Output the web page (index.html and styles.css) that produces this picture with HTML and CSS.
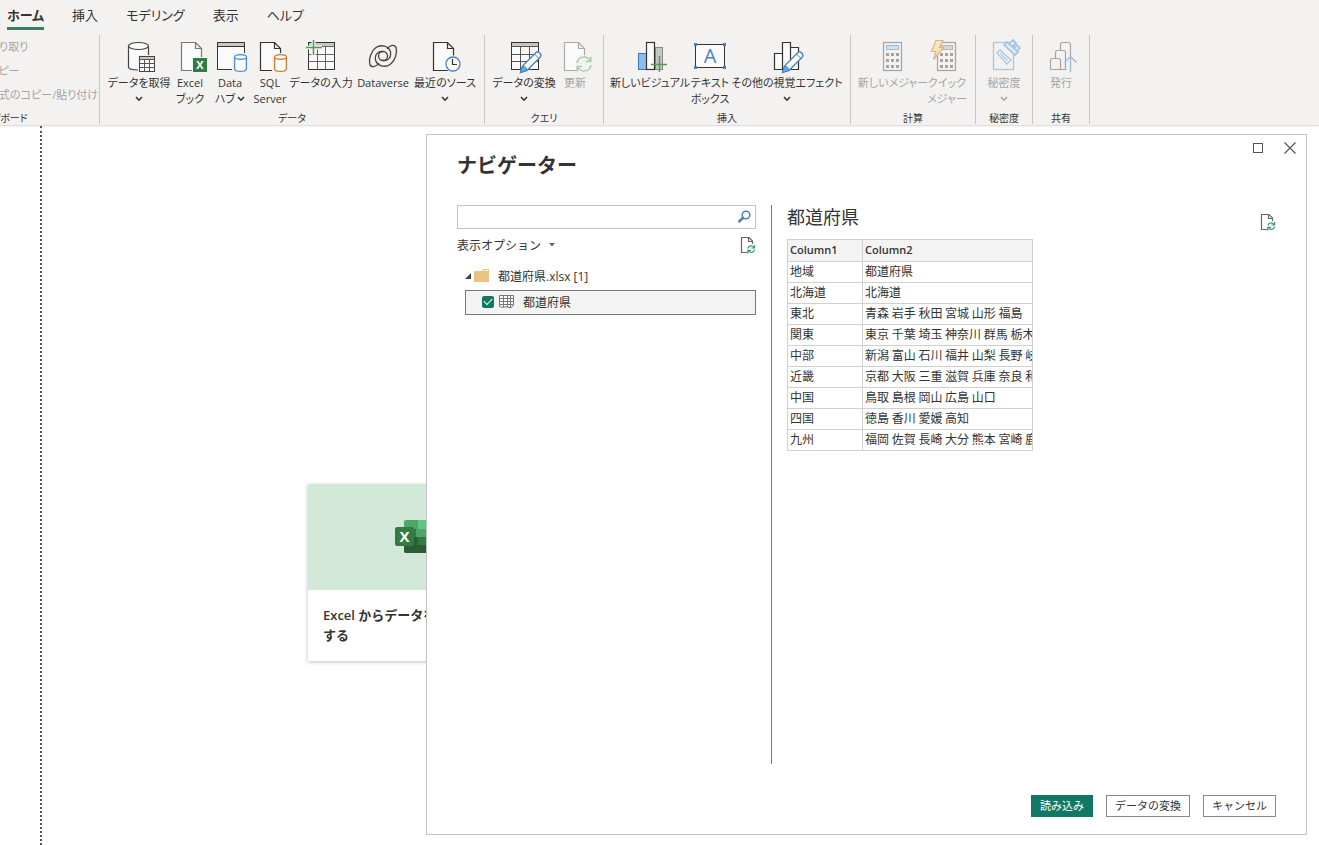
FILE: index.html
```html
<!DOCTYPE html>
<html lang="ja">
<head>
    <meta charset="UTF-8">
    <meta name="viewport" content="width=device-width, initial-scale=1.0">
    <title>ナビゲーター</title>
    <link rel="stylesheet" href="styles.css">
</head>
<body>

<!-- shared icon parts -->
<svg class="defs" width="0" height="0" aria-hidden="true">
    <defs>
        <symbol id="doc" viewBox="0 0 22 30" overflow="visible">
            <path d="M.5 .5H14.5L20.5 6.5V28.500H.5Z M14.500 .5V6.500H20.5" fill="#fafafa" stroke="currentColor" stroke-width="1.2"/>
        </symbol>
        <symbol id="cyl" viewBox="0 0 14 18" overflow="visible">
            <path d="M.6 3V15C.6 18.200 12.400 18.200 12.400 15V3" fill="#fafafa" stroke="currentColor" stroke-width="1.3"/>
            <ellipse cx="6.500" cy="3" rx="5.900" ry="2.300" fill="#fafafa" stroke="currentColor" stroke-width="1.3"/>
        </symbol>
        <symbol id="pen" viewBox="0 0 22 22" overflow="visible">
            <path d="M.5 21.500L2.500 15L16 1.500C18-.5 22.500 3.500 20.300 6L7 19.500Z" fill="#fafafa" stroke="#4a84bf" stroke-width="1.4"/>
            <path d="M.5 21.500L2.500 15.500C5 15 7 17 7 19.500Z" fill="#69a7e0" stroke="#4a84bf"/>
            <path d="M14.500 3L19 7.500" stroke="#4a84bf" fill="none"/>
        </symbol>
        <symbol id="sync" viewBox="0 0 16 16" overflow="visible">
            <path d="M1 7C2 0 11-1 14.500 5M14.800 .5V5.500H10M15 9C14 16 5 17 1.500 11M1.200 15.500V10.500H6" fill="none" stroke="currentColor" stroke-width="1.4"/>
        </symbol>
        <symbol id="chev" viewBox="0 0 8 6">
            <path d="M1 1L4 4.200L7 1" fill="none" stroke="currentColor" stroke-width="1.600"/>
        </symbol>
        <symbol id="keys" viewBox="0 0 20 30" overflow="visible">
            <rect x=".5" y=".5" width="18" height="28" fill="#f3f2f1" stroke="#a6a4a2" stroke-width="1.2"/>
            <path d="M3 11H6V14H3ZM8 11H11V14H8ZM13 11H16V14H13ZM3 17H6V20H3ZM8 17H11V20H8ZM13 17H16V20H13ZM3 23H6V26H3ZM8 23H11V26H8ZM13 23H16V26H13Z" fill="#a6a4a2"/>
        </symbol>
        <symbol id="lobe" viewBox="0 0 32 32" overflow="visible">
            <path d="M12 22C9 26.500 4 27 2.800 23C1.500 18 4 10 9 6.500C14 3 22 5 23.500 11C24.500 17 20 20.500 16 19.500"/>
        </symbol>
        <symbol id="refresh-doc" viewBox="0 0 16 18">
            <path d="M7 16.500H1.500V1.500H9L12.500 5V8M8.500 1.500V5.500H12.500" fill="none" stroke="#666" stroke-width="1.2"/>
            <path d="M7.800 12.500C8.500 9.500 12.500 9 14 11.500M14.600 9V12H11.500M14.700 13.500C14 16.800 10 17.300 8.500 14.700M7.800 17.400V14.300H11" fill="none" stroke="#3f9677" stroke-width="1.2"/>
        </symbol>
    </defs>
</svg>

<header class="ribbon">
    <nav class="tabs">
        <a href="#" class="tab active">ホーム</a>
        <a href="#" class="tab">挿入</a>
        <a href="#" class="tab">モデリング</a>
        <a href="#" class="tab">表示</a>
        <a href="#" class="tab">ヘルプ</a>
    </nav>

    <div class="groups">
        <section class="group clipboard">
            <div class="stack">
                <button type="button" disabled>切り取り</button>
                <button type="button" disabled>コピー</button>
                <button type="button" disabled>書式のコピー/貼り付け</button>
            </div>
            <h2>クリップボード</h2>
        </section>

        <section class="group">
            <div class="tools">
                <button type="button" class="tool medium">
                    <svg class="icon" viewBox="0 0 32 32">
                        <path d="M5.500 5V26C5.500 30 25.500 30 25.500 26V5" fill="#fafafa" stroke="#444" stroke-width="1.200"/>
                        <ellipse cx="15.500" cy="5" rx="10" ry="3.500" fill="#fafafa" stroke="#444" stroke-width="1.200"/>
                        <rect x="15" y="14" width="18" height="18" fill="#f3f2f1"/>
                        <rect x="16.500" y="15.500" width="15" height="15" fill="#fafafa" stroke="#444"/>
                        <path d="M17 16H31V18H17Z" fill="#c8c6c4"/>
                        <path d="M16.500 18.500H31.500M16.500 22.500H31.500M16.500 26.500H31.500M21.500 18.500V30.500M26.500 18.500V30.500" stroke="#555" fill="none"/>
                    </svg>
                    <span>データを取得</span>
                    <svg class="chev"><use href="#chev"/></svg>
                </button>
                <button type="button" class="tool small">
                    <svg class="icon" viewBox="0 0 32 32">
                        <use href="#doc" x="7" y="1" width="22" height="30" color="#777"/>
                        <rect x="18" y="16" width="16" height="16" fill="#f3f2f1"/>
                        <rect x="19" y="17" width="14" height="14" fill="#2f7d41"/>
                        <text x="26" y="28" text-anchor="middle" class="badge-x">X</text>
                    </svg>
                    <span>Excel</span>
                    <span>ブック</span>
                </button>
                <button type="button" class="tool small">
                    <svg class="icon" viewBox="0 0 32 32">
                        <rect x="3.500" y="1.500" width="27" height="27" fill="#fafafa" stroke="#333"/>
                        <path d="M4 2H30V5H4Z" fill="#c8c6c4"/>
                        <path d="M3.500 5.500H30.500" stroke="#333"/>
                        <rect x="18" y="12" width="16" height="19" fill="#f3f2f1"/>
                        <use href="#cyl" x="20" y="13" width="14" height="18" color="#4a8fd6"/>
                    </svg>
                    <span>Data</span>
                    <span>ハブ<svg class="chev"><use href="#chev"/></svg></span>
                </button>
                <button type="button" class="tool small">
                    <svg class="icon" viewBox="0 0 32 32">
                        <use href="#doc" x="6" y="1" width="22" height="30" color="#333"/>
                        <rect x="18" y="12" width="16" height="19" fill="#f3f2f1"/>
                        <use href="#cyl" x="20" y="13" width="14" height="18" color="#d07a2c"/>
                    </svg>
                    <span>SQL</span>
                    <span>Server</span>
                </button>
                <button type="button" class="tool medium">
                    <svg class="icon" viewBox="0 0 32 32">
                        <rect x="3.500" y="1.500" width="26" height="27" fill="#fafafa" stroke="#333"/>
                        <path d="M4 2H29V5H4Z" fill="#c8c6c4"/>
                        <path d="M3.500 5.500H29.500M3.500 13.500H29.500M3.500 20.500H29.500M12.500 5.500V28.500M20.500 5.500V28.500" stroke="#666" fill="none"/>
                        <path d="M8.500-1V14M1 6.500H17" stroke="#f3f2f1" stroke-width="4"/>
                        <path d="M8.500-1V14M1 6.500H17" stroke="#4f9d50" stroke-width="1.500"/>
                    </svg>
                    <span>データの入力</span>
                </button>
                <button type="button" class="tool medium">
                    <svg class="icon" viewBox="0 0 32 32" fill="none" stroke="#444" stroke-width="1.300">
                        <use href="#lobe" width="32" height="32"/>
                        <use href="#lobe" width="32" height="32" transform="rotate(180 16 15)"/>
                        <circle cx="16" cy="15" r="4.500"/>
                    </svg>
                    <span>Dataverse</span>
                </button>
                <button type="button" class="tool medium">
                    <svg class="icon" viewBox="0 0 32 32">
                        <use href="#doc" x="4" y="1" width="22" height="30" color="#333"/>
                        <circle cx="24" cy="23" r="8.500" fill="#f3f2f1"/>
                        <circle cx="24" cy="23" r="7" fill="#fafafa" stroke="#4a84bf" stroke-width="1.300"/>
                        <path d="M23.500 18V23.500H28" fill="none" stroke="#333" stroke-width="1.200"/>
                    </svg>
                    <span>最近のソース</span>
                    <svg class="chev"><use href="#chev"/></svg>
                </button>
            </div>
            <h2>データ</h2>
        </section>

        <section class="group">
            <div class="tools">
                <button type="button" class="tool medium">
                    <svg class="icon" viewBox="0 0 32 32">
                        <rect x="3.500" y="1.500" width="27" height="27" fill="#fafafa" stroke="#333"/>
                        <path d="M4 2H30V5H4Z" fill="#c8c6c4"/>
                        <path d="M3.500 5.500H30.500M3.500 13.500H30.500M3.500 20.500H30.500M12.500 5.500V28.500M21.500 5.500V28.500" stroke="#555" fill="none"/>
                        <use href="#pen" x="12" y="10" width="22" height="22"/>
                    </svg>
                    <span>データの変換</span>
                    <svg class="chev"><use href="#chev"/></svg>
                </button>
                <button type="button" class="tool small" disabled>
                    <svg class="icon" viewBox="0 0 32 32">
                        <use href="#doc" x="5" y="1" width="22" height="30" color="#aaa"/>
                        <circle cx="25" cy="23" r="9" fill="#f3f2f1"/>
                        <use href="#sync" x="17" y="15" width="16" height="16" color="#aac9a8"/>
                    </svg>
                    <span>更新</span>
                </button>
            </div>
            <h2>クエリ</h2>
        </section>

        <section class="group tight">
            <div class="tools">
                <button type="button" class="tool wide">
                    <svg class="icon" viewBox="0 0 32 32">
                        <rect x="4.500" y="12.500" width="8" height="16" fill="#8dbdeb" stroke="#3a78b8"/>
                        <rect x="21.500" y="6.500" width="7" height="22" fill="#c8c6c4" stroke="#888"/>
                        <rect x="12.500" y="1.500" width="8" height="27" fill="#fafafa" stroke="#333" stroke-width="1.200"/>
                        <path d="M25.500 15V31M17 23.500H33" stroke="#4f9d50" stroke-width="1.400"/>
                    </svg>
                    <span>新しいビジュアル</span>
                </button>
                <button type="button" class="tool small">
                    <svg class="icon" viewBox="0 0 32 32">
                        <rect x="1.500" y="3.500" width="29" height="23" fill="#fafafa" stroke="#333"/>
                        <path d="M0 2H3V5H0ZM29 2H32V5H29ZM0 25H3V28H0ZM29 25H32V28H29Z" fill="#4a84bf"/>
                        <text x="16" y="22" text-anchor="middle" class="letter">A</text>
                    </svg>
                    <span>テキスト</span>
                    <span>ボックス</span>
                </button>
                <button type="button" class="tool widest">
                    <svg class="icon" viewBox="0 0 32 32">
                        <path d="M3.500 28.500V12.500H11.500V1.500H19.500V6.500H27.500V28.500Z M11.500 12.500V28.500M19.500 6.500V28.500" fill="#fafafa" stroke="#333" stroke-width="1.200"/>
                        <use href="#pen" x="11" y="10" width="22" height="22"/>
                    </svg>
                    <span>その他の視覚エフェクト</span>
                    <svg class="chev"><use href="#chev"/></svg>
                </button>
            </div>
            <h2>挿入</h2>
        </section>

        <section class="group">
            <div class="tools">
                <button type="button" class="tool measure" disabled>
                    <svg class="icon" viewBox="0 0 32 32">
                        <use href="#keys" x="6" y="1" width="20" height="30"/>
                        <rect x="9.500" y="4.500" width="12" height="4" fill="#cfe0f0" stroke="#9dbcd9"/>
                    </svg>
                    <span>新しいメジャー</span>
                </button>
                <button type="button" class="tool small" disabled>
                    <svg class="icon" viewBox="0 0 32 32">
                        <use href="#keys" x="6" y="1" width="20" height="30"/>
                        <rect x="9.500" y="4.500" width="12" height="4" fill="#d8d6d4" stroke="#b8b6b4"/>
                        <path d="M5-.5H12L8.500 6.500H12.500L2.500 18.500L5 10.500H.5Z" fill="#f7e6b8" stroke="#dfb18c" stroke-width="1.200"/>
                    </svg>
                    <span>クイック</span>
                    <span>メジャー</span>
                </button>
            </div>
            <h2>計算</h2>
        </section>

        <section class="group">
            <div class="tools">
                <button type="button" class="tool small" disabled>
                    <svg class="icon" viewBox="0 0 32 32" stroke="#a9c6e3" fill="#f3f2f1" stroke-width="1.300">
                        <rect x="5.500" y="1.500" width="20" height="27"/>
                        <path d="M9 12L12 9L23 19L19 23ZM12.500 12.500L19.500 19.500"/>
                        <path d="M16 4L19 1L30 11L27 14ZM21 3L25-1L28 2L24 6M26 7L29 4L32 7L29 10" fill="#e3edf7" stroke-width="1.800"/>
                    </svg>
                    <span>秘密度</span>
                    <svg class="chev"><use href="#chev"/></svg>
                </button>
            </div>
            <h2>秘密度</h2>
        </section>

        <section class="group">
            <div class="tools">
                <button type="button" class="tool small" disabled>
                    <svg class="icon" viewBox="0 0 32 32" stroke="#a6a4a2" fill="#f3f2f1" stroke-width="1.200">
                        <path d="M15.500 28.500V3.500Q15.500 1.500 17.500 1.500H23.500Q25.500 1.500 25.500 3.500V28.500Z"/>
                        <path d="M10.500 28.500V11.500Q10.500 9.500 12.500 9.500H18.500Q20.500 9.500 20.500 11.500V28.500Z"/>
                        <path d="M5.500 28.500V19.500Q5.500 17.500 7.500 17.500H13.500Q15.500 17.500 15.500 19.500V28.500Z"/>
                        <path d="M21.500 16V31H30V16Z" stroke="none"/>
                        <path d="M25.500 31V15.500M19.500 21.500L25.500 15.500L31.500 21.500" fill="none" stroke="#a3bedb" stroke-width="1.500"/>
                    </svg>
                    <span>発行</span>
                </button>
            </div>
            <h2>共有</h2>
        </section>
    </div>
</header>

<main class="canvas">
    <a href="#" class="card">
        <div class="card-top">
            <svg width="36" height="34" viewBox="0 0 36 34">
                <rect x="9" y="0" width="27" height="33" rx="2" fill="#4fa669"/>
                <path d="M23 0H34Q36 0 36 2V9H23Z" fill="#62c584"/>
                <path d="M23 9H36V17H23Z" fill="#4fa669"/>
                <path d="M9 17H23V25H9Z" fill="#2b6339"/>
                <path d="M23 17H36V25H23Z" fill="#347a43"/>
                <path d="M9 25H36V31Q36 33 34 33H11Q9 33 9 31Z" fill="#2d5b37"/>
                <rect x="10" y="9" width="11" height="19" fill="#285a35" opacity=".6"/>
                <rect x="0" y="7" width="19" height="19" rx="2" fill="#347a43"/>
                <text x="9.500" y="22" text-anchor="middle" class="logo-x">X</text>
            </svg>
        </div>
        <p>Excel からデータを<br>する</p>
    </a>
</main>

<div class="dialog" role="dialog" aria-labelledby="dialogTitle">
    <div class="window-buttons">
        <button type="button" aria-label="最大化">
            <svg width="12" height="12" viewBox="0 0 12 12"><rect x="1.500" y="1.500" width="9" height="9" fill="none" stroke="#555"/></svg>
        </button>
        <button type="button" aria-label="閉じる">
            <svg width="12" height="12" viewBox="0 0 12 12"><path d="M.5 .5L11.500 11.500M11.500 .5L.5 11.500" fill="none" stroke="#555" stroke-width="1.200"/></svg>
        </button>
    </div>
    <h1 id="dialogTitle">ナビゲーター</h1>

    <div class="panes">
        <div class="left-pane">
            <div class="search">
                <input type="text" id="search" aria-label="検索">
                <svg width="14" height="14" viewBox="0 0 14 14"><circle cx="9" cy="5" r="3.800" fill="none" stroke="#4a7ebb" stroke-width="1.500"/><path d="M6.500 7.500L1.500 12" stroke="#4a7ebb" stroke-width="2.400"/></svg>
            </div>
            <div class="options">
                <button type="button">表示オプション<svg width="6" height="4" viewBox="0 0 6 4"><path d="M0 0H6L3 3.500Z" fill="#666"/></svg></button>
                <button type="button" aria-label="最新の情報に更新"><svg width="16" height="18"><use href="#refresh-doc"/></svg></button>
            </div>
            <div class="tree">
                <div class="node">
                    <svg width="6" height="6" viewBox="0 0 6 6"><path d="M6 0V6H0Z" fill="#444"/></svg>
                    <svg width="16" height="14" viewBox="0 0 16 14"><path d="M0 2H8L9 0H15V13H0Z" fill="#eac282"/><path d="M10 1.500H14" stroke="#fff"/></svg>
                    <span>都道府県.xlsx [1]</span>
                </div>
                <label class="node selected">
                    <input type="checkbox" checked>
                    <svg width="16" height="14" viewBox="0 0 16 14"><path d="M.5 .5H14.500V10.500L12 12.500H9L7 11.500L4.500 12.500L.5 11.500ZM.5 3.500H14.500M.5 6.500H14.500M.5 9.500H14.500M4.500 .5V12M8.500 .5V12M11.500 .5V12" fill="#fff" stroke="#777"/></svg>
                    <span>都道府県</span>
                </label>
            </div>
        </div>

        <div class="preview">
            <div class="preview-head">
                <h2>都道府県</h2>
                <button type="button" aria-label="プレビューの更新"><svg width="16" height="18"><use href="#refresh-doc"/></svg></button>
            </div>
            <table>
                <thead>
                <tr><th>Column1</th><th>Column2</th></tr>
                </thead>
                <tbody>
                <tr><td>地域</td><td>都道府県</td></tr>
                <tr><td>北海道</td><td>北海道</td></tr>
                <tr><td>東北</td><td>青森 岩手 秋田 宮城 山形 福島</td></tr>
                <tr><td>関東</td><td>東京 千葉 埼玉 神奈川 群馬 栃木</td></tr>
                <tr><td>中部</td><td>新潟 富山 石川 福井 山梨 長野 岐</td></tr>
                <tr><td>近畿</td><td>京都 大阪 三重 滋賀 兵庫 奈良 和</td></tr>
                <tr><td>中国</td><td>鳥取 島根 岡山 広島 山口</td></tr>
                <tr><td>四国</td><td>徳島 香川 愛媛 高知</td></tr>
                <tr><td>九州</td><td>福岡 佐賀 長崎 大分 熊本 宮崎 鹿</td></tr>
                </tbody>
            </table>
        </div>
    </div>

    <div class="actions">
        <button type="button" class="primary">読み込み</button>
        <button type="button">データの変換</button>
        <button type="button">キャンセル</button>
    </div>
</div>

</body>
</html>
```

FILE: styles.css
```css
* {
    box-sizing: border-box;
}

body {
    margin: 0;
    height: 100vh;
    display: flex;
    flex-direction: column;
    overflow: hidden;
    background-color: #fff;
    color: #333;
    font-family: "Open Sans", "Noto Sans CJK JP", sans-serif;
    font-size: 12px;
}

h1, h2, p {
    margin: 0;
}

a {
    color: inherit;
    text-decoration: none;
}

button {
    padding: 0;
    border: none;
    background: none;
    color: inherit;
    font: inherit;
    cursor: pointer;
}

svg {
    display: block;
    flex: none;
}

.defs {
    position: absolute;
}

/* ribbon */
.ribbon {
    background-color: #f3f2f1;
    height: 126px;
    flex: none;
    border-bottom: 1px solid #e1dfdd;
    box-shadow: 0 1px 2px rgba(0, 0, 0, 0.06);
    font-feature-settings: "palt";
}

.tabs {
    display: flex;
    gap: 28px;
    height: 35px;
    padding: 5px 7px;
    font-size: 13px;
    line-height: 20px;
}

.tab.active {
    font-weight: 700;
    border-bottom: 3px solid #3a7d68;
}

.groups {
    display: flex;
    height: 89px;
}

.group {
    display: flex;
    flex-direction: column;
    justify-content: space-between;
    padding: 6px 8px 0;
    border-right: 1px solid #c8c6c4;
}

.group.tight {
    padding: 6px 6px 0;
}

.group h2 {
    font-size: 10px;
    font-weight: 400;
    line-height: 12px;
    text-align: center;
}

.group.clipboard {
    width: 100px;
    padding: 0;
    overflow: hidden;
}

.group.clipboard h2 {
    margin-left: -34px;
    text-align: left;
}

.stack {
    display: flex;
    flex-direction: column;
    align-items: flex-start;
    margin-left: -12px;
    font-size: 11px;
    line-height: 24px;
}

.stack button,
.tool {
    white-space: nowrap;
}

.tools {
    display: flex;
}

.tool {
    display: flex;
    flex-direction: column;
    align-items: center;
    font-size: 11px;
    line-height: 16px;
}

.tool span {
    display: flex;
    align-items: center;
    gap: 2px;
}

button:disabled {
    color: #a6a4a2;
    cursor: default;
}

.small {
    width: 40px;
}

.medium {
    width: 62px;
}

.measure {
    width: 68px;
}

.wide {
    width: 80px;
}

.widest {
    width: 114px;
}

.icon {
    width: 32px;
    height: 32px;
    margin-bottom: 2px;
    overflow: visible;
}

.chev {
    width: 8px;
    height: 6px;
}

.tool > .chev {
    margin: 5px 0;
}

.badge-x {
    fill: #fff;
    font: 700 11px "Open Sans", sans-serif;
}

.letter {
    fill: #4a84bf;
    font: 20px "Open Sans", sans-serif;
}

.logo-x {
    fill: #fff;
    font: 700 15px "Open Sans", sans-serif;
}

/* report canvas */
.canvas {
    flex: 1;
    margin-left: 40px;
    padding: 358px 0 0 266px;
    border-left: 2px dotted #555;
}

.card {
    display: block;
    width: 210px;
    background-color: #fff;
    box-shadow: 0 1px 4px rgba(0, 0, 0, 0.25);
}

.card-top {
    display: flex;
    align-items: center;
    justify-content: center;
    height: 106px;
    background-color: #d2e9da;
}

.card p {
    height: 71px;
    padding: 15px;
    font-size: 13px;
    font-weight: 600;
    line-height: 20px;
}

/* navigator */
.dialog {
    position: absolute;
    top: 134px;
    right: 12px;
    bottom: 10px;
    left: 426px;
    display: flex;
    flex-direction: column;
    padding: 7px 30px 17px;
    border: 1px solid #c3c3c3;
    background-color: #fff;
}

.window-buttons {
    display: flex;
    justify-content: flex-end;
    gap: 20px;
    margin-right: -20px;
    height: 12px;
}

.dialog h1 {
    font-size: 20px;
    line-height: 24px;
}

.panes {
    flex: 1;
    display: flex;
    margin-top: 27px;
}

.left-pane {
    width: 315px;
    padding-right: 15px;
    border-right: 1px solid #777;
}

.search {
    display: flex;
    align-items: center;
    height: 24px;
    padding-right: 4px;
    border: 1px solid #c3c3c3;
}

.search input {
    flex: 1;
    height: 20px;
    border: none;
    outline: none;
    font: inherit;
}

.options {
    display: flex;
    align-items: center;
    justify-content: space-between;
    height: 32px;
}

.options button {
    display: flex;
    align-items: center;
    gap: 8px;
}

.tree {
    display: grid;
    gap: 2px;
    padding: 2px 0 0 8px;
}

.node {
    display: flex;
    align-items: center;
    height: 25px;
}

.node svg + svg {
    margin: 0 8px 0 3px;
}

.node.selected {
    padding: 0 0 2px 16px;
    border: 1px solid #777;
    background-color: #f3f3f3;
}

.node.selected svg {
    margin: 0 8px 0 5px;
}

.node input {
    appearance: none;
    display: grid;
    place-items: center;
    width: 12px;
    height: 12px;
    margin: 0;
    border-radius: 2px;
    background-color: #117865;
}

.node input:checked::before {
    content: "";
    width: 7px;
    height: 4px;
    margin-bottom: 2px;
    border: solid #fff;
    border-width: 0 0 1px 1px;
    transform: rotate(-45deg);
}

.preview {
    flex: 1;
    padding-left: 15px;
}

.preview-head {
    display: flex;
    align-items: center;
    justify-content: space-between;
    height: 34px;
}

.preview-head h2 {
    height: 34px;
    font-size: 18px;
    font-weight: 400;
    line-height: 24px;
}

table {
    width: 246px;
    table-layout: fixed;
    border-collapse: collapse;
    font-family: "Noto Sans CJK JP", sans-serif;
}

th, td {
    height: 21px;
    padding: 0 2px 2px;
    border: 1px solid #d0d0d0;
    line-height: 18px;
    text-align: left;
    white-space: nowrap;
    overflow: hidden;
}

th {
    height: 22px;
    background-color: #f3f3f3;
    font-family: "Open Sans", sans-serif;
    font-size: 11px;
    font-weight: 600;
}

th:first-child {
    width: 75px;
}

.actions {
    display: flex;
    justify-content: flex-end;
    gap: 13px;
    margin-top: 31px;
}

.actions button {
    height: 22px;
    padding: 0 8px;
    border: 1px solid #888;
    font-size: 11px;
    line-height: 18px;
}

.actions .primary {
    border-color: #117865;
    background-color: #117865;
    color: #fff;
}
```
